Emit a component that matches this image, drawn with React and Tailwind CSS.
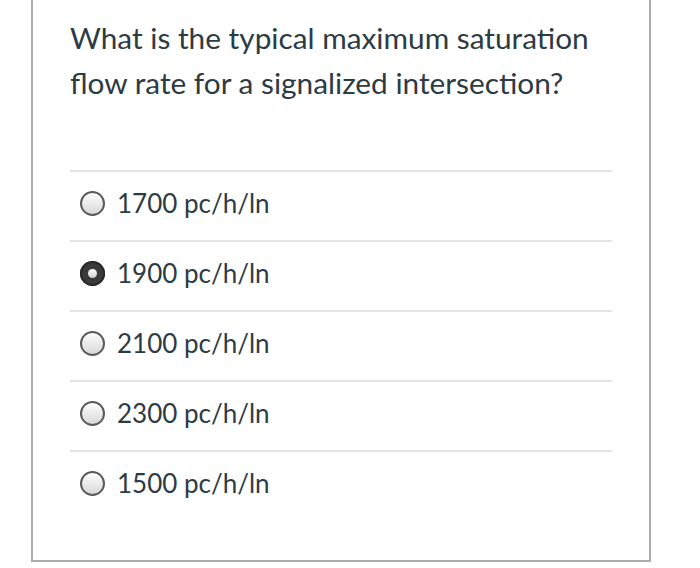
const options = [
  { label: "1700 pc/h/ln", selected: false },
  { label: "1900 pc/h/ln", selected: true },
  { label: "2100 pc/h/ln", selected: false },
  { label: "2300 pc/h/ln", selected: false },
  { label: "1500 pc/h/ln", selected: false },
];

function Radio({ selected }) {
  if (selected) {
    return (
      <span className="flex h-[25px] w-[25px] shrink-0 items-center justify-center rounded-full bg-[#3a3a3a] shadow-[inset_0_0_0_2px_#2a2a2a]">
        <span className="h-[9px] w-[9px] rounded-full bg-gradient-to-b from-white to-[#cfcfcf]" />
      </span>
    );
  }
  return (
    <span className="h-[25px] w-[25px] shrink-0 rounded-full border-2 border-[#5a5a5a] bg-gradient-to-b from-[#fdfdfd] to-[#d9d9d9]" />
  );
}

export default function App() {
  return (
    <div className="h-[568px] w-[700px] bg-white font-['Lato',sans-serif] text-[#2d3b45]">
      <div className="ml-[31px] h-[562px] w-[620px] border-x-2 border-b-2 border-[#ababab] px-[37px] pt-[15px]">
        <h1 className="text-[29.8px] leading-[45px] font-normal">
          What is the typical maximum saturation flow rate for a signalized intersection?
        </h1>

        <ul className="mt-[65px]">
          {options.map((opt) => (
            <li
              key={opt.label}
              className="flex h-[70px] items-center gap-[12px] border-t-2 border-[#e3e3e3] pb-[6px] pl-[10px]"
            >
              <Radio selected={opt.selected} />
              <span className="text-[26px] leading-none">{opt.label}</span>
            </li>
          ))}
        </ul>
      </div>
    </div>
  );
}
